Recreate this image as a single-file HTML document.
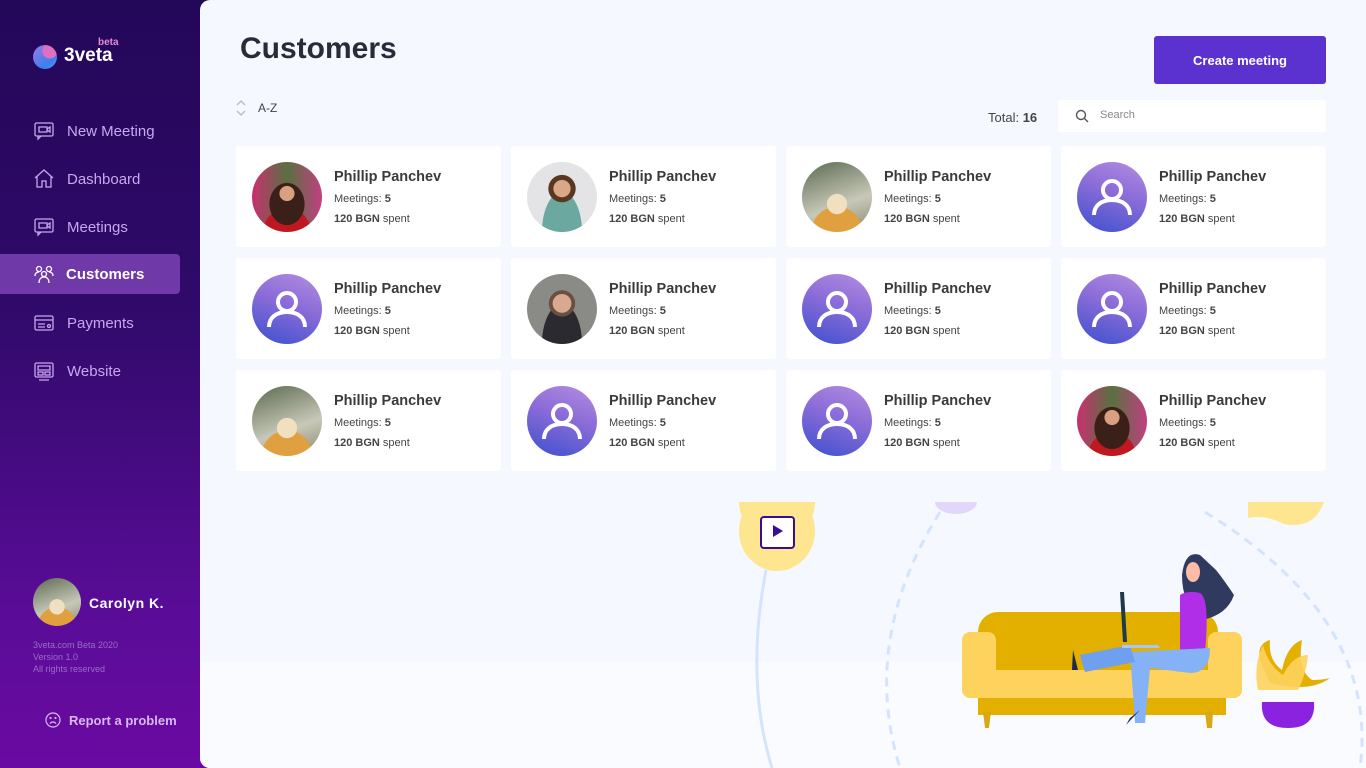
<!DOCTYPE html>
<html><head><meta charset="utf-8"><style>
*{box-sizing:border-box;margin:0;padding:0}
body{width:1366px;height:768px;overflow:hidden;font-family:"Liberation Sans",sans-serif;background:linear-gradient(180deg,#230758 0%,#300a6a 40%,#5a0c98 80%,#6a0aa2 100%);position:relative}
.side{position:absolute;left:0;top:0;width:200px;height:768px}
.logo{position:absolute;left:33px;top:45px;width:24px;height:24px;border-radius:50%;background:radial-gradient(circle at 70% 25%,#e06fc0 0 30%,transparent 31%),linear-gradient(135deg,#9a7be0,#3b7ef0 70%,#5a9cf5)}
.logot{position:absolute;left:64px;top:45px;color:#fff;font-size:19px;font-weight:bold}
.beta{position:absolute;left:98px;top:37px;color:#e48ad6;font-size:10px;font-weight:bold}
.nav{position:absolute;left:0;width:180px;height:40px;color:#c9a7ee;font-size:15px;display:flex;align-items:center;padding-left:67px}
.nav svg{position:absolute;left:34px;top:10px}
.nav.act{background:#6f3aa8;color:#fff;font-weight:bold;border-radius:0 4px 4px 0;padding-left:66px}
.main{position:absolute;left:200px;top:0;width:1166px;height:768px;background:#f5f8fe;border-radius:10px 0 0 10px;overflow:hidden}
.floor{position:absolute;left:0;top:662px;width:1166px;height:106px;background:#fafbff}
h1{position:absolute;left:40px;top:32px;font-size:30px;color:#2a2a3a;font-weight:bold}
.btn{position:absolute;left:954px;top:36px;width:172px;height:48px;background:#5b32d0;border-radius:3px;color:#fff;font-weight:bold;font-size:13px;display:flex;align-items:center;justify-content:center}
.card{position:absolute;width:265px;height:101px;background:#fff;border-radius:3px}
.av{position:absolute;left:16px;top:16px;width:70px;height:70px;border-radius:50%;overflow:hidden}
.nm{position:absolute;left:98px;top:23px;font-size:14.5px;font-weight:bold;color:#3a3a3a}
.l1{position:absolute;left:98px;top:47px;font-size:11px;color:#444}
.l2{position:absolute;left:98px;top:67px;font-size:11px;color:#444}
.def{background:linear-gradient(20deg,#4a55d0 10%,#8a6bd8 55%,#b48ee0)}
</style></head><body>
<div class="side">
<div class="logo"></div><div class="logot">3veta</div><div class="beta">beta</div>
<div class="nav" style="top:111px"><svg width="20" height="20" viewBox="0 0 20 20" fill="none" stroke="#c9a7ee" stroke-width="1.3"><rect x="1" y="2" width="18" height="13" rx="1.5"/><path d="M4 15v3l3-3M5 6v5h8V6zM13 8l3-2v5l-3-2"/></svg>New Meeting</div>
<div class="nav" style="top:159px"><svg width="20" height="20" viewBox="0 0 20 20" fill="none" stroke="#c9a7ee" stroke-width="1.3"><path d="M1 9L10 1l9 8M3 7v11h5v-6h4v6h5V7"/></svg>Dashboard</div>
<div class="nav" style="top:207px"><svg width="20" height="20" viewBox="0 0 20 20" fill="none" stroke="#c9a7ee" stroke-width="1.3"><rect x="1" y="2" width="18" height="13" rx="1.5"/><path d="M4 15v3l3-3M5 6h8v5H5zM13 8l3-2v5l-3-2"/></svg>Meetings</div>
<div class="nav act" style="top:254px"><svg width="20" height="20" viewBox="0 0 20 20" fill="none" stroke="#fff" stroke-width="1.3"><circle cx="5" cy="5" r="2.5"/><circle cx="15" cy="5" r="2.5"/><circle cx="10" cy="10" r="2.5"/><path d="M1 12c0-3 2-4 4-4M19 12c0-3-2-4-4-4M5 19c0-4 2-6 5-6s5 2 5 6"/></svg>Customers</div>
<div class="nav" style="top:303px"><svg width="20" height="20" viewBox="0 0 20 20" fill="none" stroke="#c9a7ee" stroke-width="1.3"><rect x="1" y="3" width="18" height="14" rx="1.5"/><path d="M1 7h18M4 11h7M4 14h7"/><circle cx="15" cy="13" r="1.5"/></svg>Payments</div>
<div class="nav" style="top:351px"><svg width="20" height="20" viewBox="0 0 20 20" fill="none" stroke="#c9a7ee" stroke-width="1.3"><rect x="1" y="2" width="18" height="14" rx="1.5"/><path d="M4 5h12v4H4zM4 11h5v3H4zM11 11h5v3h-5zM5 19h10"/></svg>Website</div>
<div style="position:absolute;left:33px;top:578px;width:48px;height:48px;border-radius:50%;background:radial-gradient(circle at 50% 60%,#f0e0c0 0 20%,transparent 21%),radial-gradient(circle at 50% 100%,#e0a040 0 35%,transparent 36%),linear-gradient(160deg,#5a6a50,#c8c8b8 60%,#8a8a70)"></div>
<div style="position:absolute;left:89px;top:595px;color:#fff;font-size:14px;font-weight:bold;letter-spacing:.5px">Carolyn K.</div>
<div style="position:absolute;left:33px;top:639px;color:#9b6cc8;font-size:9px;line-height:12px">3veta.com Beta 2020<br>Version 1.0<br>All rights reserved</div>
<svg style="position:absolute;left:45px;top:712px" width="16" height="16" viewBox="0 0 16 16" fill="none" stroke="#d8b8f0" stroke-width="1.2"><circle cx="8" cy="8" r="7"/><path d="M5 11.5c1.5-2 4.5-2 6 0"/><circle cx="5.5" cy="6" r=".5"/><circle cx="10.5" cy="6" r=".5"/></svg>
<div style="position:absolute;left:69px;top:713px;color:#d8b8f0;font-size:13px;font-weight:bold">Report a problem</div>
</div>
<div class="main">
<div class="floor"></div>
<h1>Customers</h1>
<div class="btn">Create meeting</div>
<svg style="position:absolute;left:36px;top:99px" width="10" height="18" viewBox="0 0 10 18" fill="none" stroke="#bbb" stroke-width="1.3"><path d="M1 6l4-4 4 4M1 12l4 4 4-4"/></svg>
<div style="position:absolute;left:58px;top:101px;font-size:12px;color:#444">A-Z</div>
<div style="position:absolute;left:788px;top:110px;font-size:13px;color:#444">Total: <b>16</b></div>
<div style="position:absolute;left:858px;top:100px;width:268px;height:32px;background:#fff;border-radius:3px"></div>
<svg style="position:absolute;left:875px;top:109px" width="14" height="14" viewBox="0 0 14 14" fill="none" stroke="#555" stroke-width="1.4"><circle cx="6" cy="6" r="4.5"/><path d="M9.5 9.5L13 13"/></svg>
<div style="position:absolute;left:900px;top:109px;font-size:11px;color:#888">Search</div>
<svg style="position:absolute;left:520px;top:502px" width="646" height="266" viewBox="720 502 646 266">
<path d="M766 570 Q745 680 772 768" fill="none" stroke="#d4e4fc" stroke-width="3"/>
<path d="M940 512 Q860 640 900 768" fill="none" stroke="#d4e4fc" stroke-width="3" stroke-dasharray="9 7"/>
<path d="M1205 512 Q1380 620 1360 768" fill="none" stroke="#d4e4fc" stroke-width="3" stroke-dasharray="9 7"/>
<path d="M739 502 h76 a38 38 0 0 1 -76 0z" fill="#fee58f"/><ellipse cx="777" cy="531" rx="38" ry="40" fill="#fee58f"/>
<rect x="761" y="517" width="33" height="31" rx="3" fill="#fff" stroke="#3a0aa0" stroke-width="2"/><path d="M773 525v12l10-6z" fill="#3a0aa0"/>
<path d="M935 502h42a21 12 0 0 1 -42 0z" fill="#e2d6fb"/>
<path d="M1248 502h76q-10 28-40 22-20-10-36-6z" fill="#fee58f"/>
<rect x="978" y="612" width="240" height="90" rx="20" fill="#e3b000"/>
<rect x="978" y="698" width="248" height="17" fill="#e3b000"/>
<path d="M983 712h8l-2 16h-4zM1205 712h8l-1 16h-5z" fill="#d8a818"/>
<rect x="962" y="632" width="34" height="66" rx="8" fill="#fdd25d"/>
<rect x="1208" y="632" width="34" height="66" rx="8" fill="#fdd25d"/>
<rect x="985" y="670" width="240" height="28" fill="#fdd25d"/>
<path d="M1200 555q-15-5-18 20 0 30 20 45 25-5 32-25-10-15-18-25z" fill="#2f3a5e"/>
<ellipse cx="1193" cy="572" rx="7" ry="10" fill="#fcbca6"/>
<path d="M1180 595q8-5 20-2 10 5 5 60h-25z" fill="#b02ee8"/>
<path d="M1130 652 l80-4 q0 25-20 25 l-40 -5 -5 55 h-10z" fill="#85b2f6"/>
<path d="M1080 655l50-10 5 17-50 10z" fill="#6ea0ef"/>
<path d="M1073 650l5 20-6 0z M1130 718l10-8-14 15z" fill="#1e2b4c"/>
<path d="M1120 592l4 0 3 50-4 0z" fill="#1e3a4a"/><path d="M1122 645h36l2 3h-38z" fill="#a7c8f5"/>
<path d="M1262 665q-8-20 8-25-2 20 12 30 5-25 20-30-5 30 10 40 10 0 18-2-20 15-60 5z" fill="#e3b000"/>
<path d="M1258 690q-5-25 5-45 5 20 20 30 10-20 25-20-2 20-10 35z" fill="#fdd25d" opacity=".9"/>
<path d="M1262 702h52q2 26-26 26-28 0-26-26z" fill="#8a22e0"/>
</svg>
</div>
<div style="position:absolute;left:0;top:0">
<div class="card" style="left:236px;top:146px"><div class="av" style="background:radial-gradient(circle at 50% 45%,#d8a080 0 14%,transparent 15%),radial-gradient(ellipse at 50% 60%,#3a2018 0 35%,transparent 36%),radial-gradient(circle at 50% 100%,#c01820 0 30%,transparent 31%),linear-gradient(90deg,#c83070,#5a7040 50%,#c04080)"></div><div class="nm">Phillip Panchev</div><div class="l1">Meetings: <b>5</b></div><div class="l2"><b>120 BGN</b> spent</div></div>
<div class="card" style="left:511px;top:146px"><div class="av" style="background:radial-gradient(circle at 50% 38%,#d8a888 0 15%,#5a3820 16% 24%,transparent 25%),radial-gradient(ellipse at 50% 100%,#6aa8a0 0 40%,transparent 41%),#e4e4e6"></div><div class="nm">Phillip Panchev</div><div class="l1">Meetings: <b>5</b></div><div class="l2"><b>120 BGN</b> spent</div></div>
<div class="card" style="left:786px;top:146px"><div class="av" style="background:radial-gradient(circle at 50% 60%,#f0e0c0 0 18%,transparent 19%),radial-gradient(circle at 50% 100%,#e0a040 0 32%,transparent 33%),linear-gradient(160deg,#5a6a50,#c8c8b8 60%,#8a8a70)"></div><div class="nm">Phillip Panchev</div><div class="l1">Meetings: <b>5</b></div><div class="l2"><b>120 BGN</b> spent</div></div>
<div class="card" style="left:1061px;top:146px"><div class="av def"><svg width="70" height="70"><circle cx="35" cy="28" r="9" fill="none" stroke="#fff" stroke-width="4"/><path d="M17 53c0-10 8-15 18-15s18 5 18 15" fill="none" stroke="#fff" stroke-width="4"/></svg></div><div class="nm">Phillip Panchev</div><div class="l1">Meetings: <b>5</b></div><div class="l2"><b>120 BGN</b> spent</div></div>
<div class="card" style="left:236px;top:258px"><div class="av def"><svg width="70" height="70"><circle cx="35" cy="28" r="9" fill="none" stroke="#fff" stroke-width="4"/><path d="M17 53c0-10 8-15 18-15s18 5 18 15" fill="none" stroke="#fff" stroke-width="4"/></svg></div><div class="nm">Phillip Panchev</div><div class="l1">Meetings: <b>5</b></div><div class="l2"><b>120 BGN</b> spent</div></div>
<div class="card" style="left:511px;top:258px"><div class="av" style="background:radial-gradient(circle at 50% 42%,#d8a890 0 17%,#6a5040 18% 24%,transparent 25%),radial-gradient(ellipse at 50% 100%,#2a2a30 0 40%,transparent 41%),#8a8a86"></div><div class="nm">Phillip Panchev</div><div class="l1">Meetings: <b>5</b></div><div class="l2"><b>120 BGN</b> spent</div></div>
<div class="card" style="left:786px;top:258px"><div class="av def"><svg width="70" height="70"><circle cx="35" cy="28" r="9" fill="none" stroke="#fff" stroke-width="4"/><path d="M17 53c0-10 8-15 18-15s18 5 18 15" fill="none" stroke="#fff" stroke-width="4"/></svg></div><div class="nm">Phillip Panchev</div><div class="l1">Meetings: <b>5</b></div><div class="l2"><b>120 BGN</b> spent</div></div>
<div class="card" style="left:1061px;top:258px"><div class="av def"><svg width="70" height="70"><circle cx="35" cy="28" r="9" fill="none" stroke="#fff" stroke-width="4"/><path d="M17 53c0-10 8-15 18-15s18 5 18 15" fill="none" stroke="#fff" stroke-width="4"/></svg></div><div class="nm">Phillip Panchev</div><div class="l1">Meetings: <b>5</b></div><div class="l2"><b>120 BGN</b> spent</div></div>
<div class="card" style="left:236px;top:370px"><div class="av" style="background:radial-gradient(circle at 50% 60%,#f0e0c0 0 18%,transparent 19%),radial-gradient(circle at 50% 100%,#e0a040 0 32%,transparent 33%),linear-gradient(160deg,#5a6a50,#c8c8b8 60%,#8a8a70)"></div><div class="nm">Phillip Panchev</div><div class="l1">Meetings: <b>5</b></div><div class="l2"><b>120 BGN</b> spent</div></div>
<div class="card" style="left:511px;top:370px"><div class="av def"><svg width="70" height="70"><circle cx="35" cy="28" r="9" fill="none" stroke="#fff" stroke-width="4"/><path d="M17 53c0-10 8-15 18-15s18 5 18 15" fill="none" stroke="#fff" stroke-width="4"/></svg></div><div class="nm">Phillip Panchev</div><div class="l1">Meetings: <b>5</b></div><div class="l2"><b>120 BGN</b> spent</div></div>
<div class="card" style="left:786px;top:370px"><div class="av def"><svg width="70" height="70"><circle cx="35" cy="28" r="9" fill="none" stroke="#fff" stroke-width="4"/><path d="M17 53c0-10 8-15 18-15s18 5 18 15" fill="none" stroke="#fff" stroke-width="4"/></svg></div><div class="nm">Phillip Panchev</div><div class="l1">Meetings: <b>5</b></div><div class="l2"><b>120 BGN</b> spent</div></div>
<div class="card" style="left:1061px;top:370px"><div class="av" style="background:radial-gradient(circle at 50% 45%,#d8a080 0 14%,transparent 15%),radial-gradient(ellipse at 50% 60%,#3a2018 0 35%,transparent 36%),radial-gradient(circle at 50% 100%,#c01820 0 30%,transparent 31%),linear-gradient(90deg,#c83070,#5a7040 50%,#c04080)"></div><div class="nm">Phillip Panchev</div><div class="l1">Meetings: <b>5</b></div><div class="l2"><b>120 BGN</b> spent</div></div>
</div>
</body></html>
